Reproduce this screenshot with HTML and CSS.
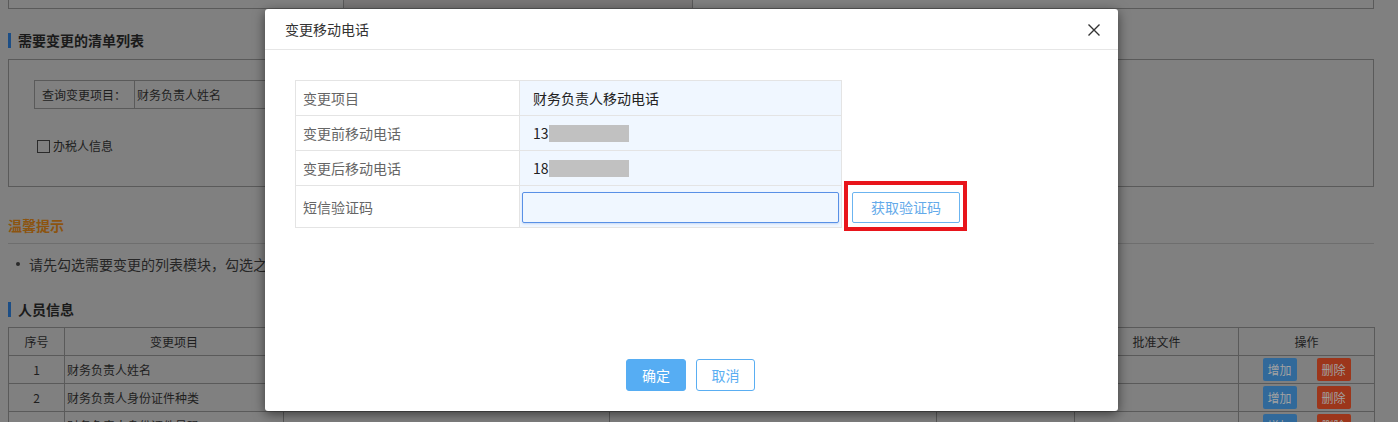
FILE: index.html
```html
<!DOCTYPE html>
<html lang="zh-CN">
<head>
<meta charset="utf-8">
<title>变更移动电话</title>
<link rel="stylesheet" href="styles.css">
</head>
<body>
<div class="page">
  <div class="top-strip">
    <div class="top-cell"></div>
    <div class="top-cell mid"></div>
    <div class="top-cell last"></div>
  </div>

  <div class="heading heading-first"><span class="bar"></span><span class="heading-text">需要变更的清单列表</span></div>

  <div class="list-box">
    <div class="query">
      <div class="query-label">查询变更项目：</div>
      <div class="query-value">财务负责人姓名</div>
    </div>
    <label class="check-row"><span class="checkbox"></span><span>办税人信息</span></label>
  </div>

  <div class="tip-title">温馨提示</div>
  <div class="tip-item"><span class="dot"></span><span>请先勾选需要变更的列表模块，勾选之后在下方列表中填写变更后的内容。</span></div>

  <div class="heading heading-second"><span class="bar"></span><span class="heading-text">人员信息</span></div>

  <table class="grid">
    <colgroup>
      <col class="c1"><col class="c2"><col class="c3"><col class="c4"><col class="c5"><col class="c6"><col class="c7">
    </colgroup>
    <thead>
      <tr><th>序号</th><th>变更项目</th><th>变更前内容</th><th>变更后内容</th><th>变更日期</th><th>批准文件</th><th>操作</th></tr>
    </thead>
    <tbody>
      <tr><td class="num">1</td><td>财务负责人姓名</td><td></td><td></td><td></td><td></td><td class="ops"><span class="btn-add">增加</span><span class="btn-del">删除</span></td></tr>
      <tr><td class="num">2</td><td>财务负责人身份证件种类</td><td></td><td></td><td></td><td></td><td class="ops"><span class="btn-add">增加</span><span class="btn-del">删除</span></td></tr>
      <tr><td class="num">3</td><td>财务负责人身份证件号码</td><td></td><td>05020100000040504</td><td></td><td></td><td class="ops"><span class="btn-add">增加</span><span class="btn-del">删除</span></td></tr>
    </tbody>
  </table>
</div>

<div class="modal">
  <div class="modal-header">
    <span class="modal-title">变更移动电话</span>
    <svg class="close" width="12" height="12" viewBox="0 0 12 12"><path d="M0.5 0.5 L11.5 11.5 M11.5 0.5 L0.5 11.5" stroke="#333" stroke-width="1.4" fill="none"/></svg>
  </div>
  <div class="modal-body">
    <div class="form-row">
      <table class="form">
        <tr class="r"><td class="lbl">变更项目</td><td class="val strong">财务负责人移动电话</td></tr>
        <tr class="r"><td class="lbl">变更前移动电话</td><td class="val">13<span class="mask"></span></td></tr>
        <tr class="r"><td class="lbl">变更后移动电话</td><td class="val">18<span class="mask mask2"></span></td></tr>
        <tr class="r-input"><td class="lbl">短信验证码</td><td class="val-input"><input class="code" type="text"></td></tr>
      </table>
      <div class="highlight"><button class="get-code" type="button">获取验证码</button></div>
    </div>
  </div>
  <div class="modal-footer">
    <button class="btn-ok" type="button">确定</button>
    <button class="btn-cancel" type="button">取消</button>
  </div>
</div>
</body>
</html>
```

FILE: styles.css
```css
* { box-sizing: border-box; }
html, body { margin: 0; padding: 0; }
body {
  background: #808080;
  font-family: "Noto Sans CJK SC", "Noto Sans", sans-serif;
  color: #1e1e1e;
  width: 1398px;
  height: 422px;
  overflow: hidden;
  position: relative;
}
.page { margin-left: 8px; width: 1366px; }

.top-strip { display: grid; grid-template-columns: 335px 349px 1fr; height: 9px; border-bottom: 1px solid #5a5a5a; }
.top-cell { border-left: 1px solid #5a5a5a; }
.top-cell.mid { background: #787676; }
.top-cell.last { border-right: 1px solid #5a5a5a; }

.heading { display: flex; align-items: center; height: 16px; }
.heading-first { margin-top: 23px; }
.heading-second { margin-top: 27px; }
.bar { width: 3px; height: 15px; background: #1c4e86; margin-right: 7px; }
.heading-text { font-size: 14px; font-weight: bold; line-height: 16px; color: #1a1a1a; }

.list-box { margin-top: 11px; height: 128px; border: 1px solid #5a5a5a; padding: 20px 0 0 25px; }
.query { display: flex; width: 540px; height: 29px; border: 1px solid #5a5a5a; font-size: 12px; line-height: 27px; }
.query-label { width: 100px; border-right: 1px solid #5a5a5a; padding-left: 7px; color: #1e1e1e; }
.query-value { padding-left: 2px; color: #222; }
.check-row { display: flex; align-items: center; margin-top: 30px; margin-left: 3px; font-size: 12px; line-height: 14px; }
.checkbox { width: 13px; height: 13px; border: 1px solid #2a2a2a; margin-right: 3px; }

.tip-title { margin-top: 28px; font-size: 14px; font-weight: bold; line-height: 20px; color: #8c5410; padding-bottom: 8px; border-bottom: 1px solid #6e6e6e; }
.tip-item { margin-top: 10px; display: flex; align-items: center; font-size: 14px; line-height: 20px; color: #262626; }
.dot { width: 4px; height: 4px; border-radius: 50%; background: #2a2a2a; margin: 0 9px 0 8px; }

.grid { margin-top: 10px; width: 1366px; border-collapse: collapse; table-layout: fixed; font-size: 12px; color: #1e1e1e; }
.c1 { width: 56px; } .c2 { width: 219px; } .c3 { width: 326px; } .c4 { width: 327px; } .c5 { width: 138px; } .c6 { width: 164px; } .c7 { width: 136px; }
.grid th, .grid td { border: 1px solid #5a5a5a; height: 28px; padding: 0 2px; line-height: 16px; white-space: nowrap; overflow: hidden; }
.grid th { font-weight: normal; text-align: center; }
.grid td.num { text-align: center; }
.grid td.ops { text-align: center; padding: 0; font-size: 0; }
.btn-add, .btn-del { display: inline-block; width: 34px; height: 23px; line-height: 23px; font-size: 12px; color: #a2a2a2; border-radius: 2px; vertical-align: middle; }
.btn-add { background: #31699a; margin-right: 20px; }
.btn-del { background: #9c361b; }

.modal {
  position: absolute; left: 265px; top: 9px; width: 853px; height: 402px;
  background: #fff; border-radius: 3px;
  box-shadow: 0 3px 12px rgba(0, 0, 0, 0.55);
  display: flex; flex-direction: column;
}
.modal-header { height: 41px; border-bottom: 1px solid #e6e6e6; display: flex; align-items: center; justify-content: space-between; padding: 0 18px 0 20px; }
.modal-title { font-size: 14px; line-height: 20px; color: #333; }
.close { display: block; margin-top: 2px; }

.modal-body { flex: 1; padding: 30px 0 0 30px; }
.form-row { display: flex; align-items: flex-end; }
.form { width: 547px; border-collapse: collapse; table-layout: fixed; font-size: 14px; }
.form td { border: 1px solid #e4e4e4; padding: 0; }
.form .lbl { width: 224px; background: #fff; color: #666; padding-left: 7px; }
.form .r td { height: 35px; }
.form .r-input td { height: 42px; }
.form .val { background: #f0f7ff; color: #222; padding-left: 13px; line-height: 20px; }
.form .val.strong { color: #222; }
.mask { display: inline-block; width: 80px; height: 17px; background: #c1c1c1; vertical-align: -3px; }
.mask2 { width: 80px; }
.form .val-input { background: #f0f7ff; padding: 5px 2px 4px 2px; }
.code { display: block; width: 317px; height: 31px; margin: 0; border: 1px solid #5890e6; border-radius: 2px; background: #f0f7ff; outline: none; box-shadow: 0 1px 2px rgba(80, 130, 220, 0.25); }

.highlight { margin-left: 2px; margin-bottom: -3px; border: 4px solid #e8151b; padding: 7px 3px 4px 4px; }
.get-code { display: block; width: 108px; height: 31px; background: #fff; border: 1px solid #6bb4f0; border-radius: 2px; color: #64aaea; font-family: inherit; font-size: 14px; line-height: 29px; padding: 0; }

.modal-footer { display: flex; justify-content: center; gap: 10px; padding-bottom: 20px; margin-left: -2px; }
.btn-ok, .btn-cancel { height: 32px; font-family: inherit; font-size: 14px; border-radius: 3px; padding: 0; }
.btn-ok { width: 60px; background: #56adf3; border: 1px solid #56adf3; color: #fff; }
.btn-cancel { width: 59px; background: #fff; border: 1px solid #5aaef2; color: #5aaef2; }
```
